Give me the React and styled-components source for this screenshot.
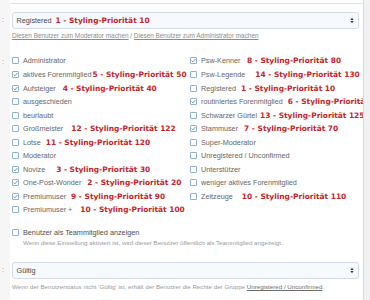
import React from "react";
import styled, { createGlobalStyle } from "styled-components";

const Global = createGlobalStyle`
  html, body { margin: 0; padding: 0; background: #fff; }
  body { overflow: hidden; }
`;

const Page = styled.div`
  display: flex;
  width: 370px;
  height: 300px;
  overflow: hidden;
  background: #fff;
  font-family: "Liberation Sans", Arial, sans-serif;
`;

const Main = styled.div`
  flex: 1;
  min-width: 0;
  display: flex;
  flex-direction: column;
`;

const RightGutter = styled.div`
  width: 6px;
  flex-shrink: 0;
  background: #f0f1f2;
  border-left: 1px solid #dadada;
`;

const FormRow = styled.div`
  display: grid;
  grid-template-columns: 10px 1fr;
  flex: ${(p) => (p.$grow ? 1 : "none")};
`;

const Label = styled.div`
  background: #f6f6f6;
  color: #8a8a8a;
  font-size: 7px;
  line-height: 8px;
  padding-left: 2px;
  padding-top: ${(p) => p.$top || 0}px;
`;

const Controls = styled.div`
  min-width: 0;
  padding: ${(p) => p.$top || 0}px 4px 0 2px;
  height: ${(p) => (p.$h ? p.$h + "px" : "auto")};
  border-bottom: ${(p) => (p.$line ? "1px solid #e3e3e3" : "none")};
`;

const Select = styled.div`
  height: ${(p) => p.$h}px;
  box-sizing: border-box;
  border: 1px solid #d6dce5;
  border-radius: 3px;
  background: #f6f9fd;
  display: flex;
  align-items: center;
  padding: 0 4px 0 3.5px;
  white-space: nowrap;
`;

const SelectText = styled.span`
  font-size: 7.25px;
  color: #4a4a4a;
`;

const Arrows = styled.svg`
  margin-left: auto;
  flex-shrink: 0;
`;

const Red = styled.span`
  font-family: "DejaVu Sans", Verdana, sans-serif;
  font-weight: bold;
  font-size: 7.45px;
  color: #c2262b;
  margin-left: ${(p) => p.$gap || 0}px;
  white-space: nowrap;
`;

const LinkLine = styled.div`
  margin-top: ${(p) => p.$top}px;
  font-size: 6.4px;
  line-height: 8px;
  color: #8c8c8c;
  white-space: nowrap;
`;

const Link = styled.span`
  text-decoration: underline;
  color: ${(p) => p.$dark ? "#6e6e6e" : "#8c8c8c"};
`;

const CheckGrid = styled.div`
  display: grid;
  grid-template-columns: 178px 1fr;
  grid-template-rows: repeat(12, 13.55px);
  grid-auto-flow: column;
`;

const CheckRow = styled.div`
  display: flex;
  align-items: center;
  white-space: nowrap;
  margin-top: ${(p) => p.$top || 0}px;
  height: ${(p) => p.$h || 13.55}px;
`;

const Box = styled.span`
  width: 7px;
  height: 7px;
  box-sizing: border-box;
  flex-shrink: 0;
  border: 1px solid #8db2d6;
  border-radius: 1px;
  background: #fff;
  display: flex;
  align-items: center;
  justify-content: center;
`;

const CheckLabel = styled.span`
  margin-left: 4px;
  font-size: 7.25px;
  color: ${(p) => (p.$dark ? "#4e4e4e" : "#666")};
`;

const Hint = styled.div`
  margin-top: ${(p) => p.$top}px;
  margin-left: ${(p) => p.$left || 0}px;
  font-size: 6.2px;
  line-height: 8px;
  color: #9a9a9a;
  white-space: nowrap;
`;

const Check = () => (
  <svg width="5" height="5" viewBox="0 0 5 5">
    <path d="M0.6 2.6 L1.9 3.8 L4.4 1.1" stroke="#4f86bd" strokeWidth="0.9" fill="none" />
  </svg>
);

const SelectArrows = () => (
  <Arrows width="4" height="7" viewBox="0 0 4 7">
    <path d="M0.4 3 L2 0.8 L3.6 3 Z" fill="#333" />
    <path d="M0.4 4 L2 6.2 L3.6 4 Z" fill="#333" />
  </Arrows>
);

const left = [
  ["Administrator"],
  ["aktives Forenmitglied", "5 - Styling-Priorität 50", 1, true],
  ["Aufsteiger", "4 - Styling-Priorität 40", 7, true],
  ["ausgeschieden"],
  ["beurlaubt"],
  ["Großmeister", "12 - Styling-Priorität 122", 8],
  ["Lotse", "11 - Styling-Priorität 120", 5],
  ["Moderator"],
  ["Novize", "3 - Styling-Priorität 30", 11, true],
  ["One-Post-Wonder", "2 - Styling-Priorität 20", 6, true],
  ["Premiumuser", "9 - Styling-Priorität 90", 5, true],
  ["Premiumuser +", "10 - Styling-Priorität 100", 8],
];

const right = [
  ["Psw-Kenner", "8 - Styling-Priorität 80", 6.5, true],
  ["Psw-Legende", "14 - Styling-Priorität 130", 10],
  ["Registered", "1 - Styling-Priorität 10", 5],
  ["routiniertes Forenmitglied", "6 - Styling-Priorität 60", 5, true],
  ["Schwarzer Gürtel", "13 - Styling-Priorität 125", 3],
  ["Stammuser", "7 - Styling-Priorität 70", 6, true],
  ["Super-Moderator"],
  ["Unregistered / Unconfirmed"],
  ["Unterstützer"],
  ["weniger aktives Forenmitglied"],
  ["Zeitzeuge", "10 - Styling-Priorität 110", 9],
];

const Item = ({ label, red, gap, checked }) => (
  <CheckRow>
    <Box>{checked && <Check />}</Box>
    <CheckLabel>{label}</CheckLabel>
    {red && <Red $gap={gap}>{red}</Red>}
  </CheckRow>
);

export default function App() {
  return (
    <>
      <Global />
      <Page>
        <Main>
          <FormRow>
            <Label />
            <Controls $h={3} $line />
          </FormRow>
          <FormRow>
            <Label $top={12}>:</Label>
            <Controls $top={8}>
              <Select $h={16.5}>
                <SelectText>Registered</SelectText>
                <Red $gap={4}>1 - Styling-Priorität 10</Red>
                <SelectArrows />
              </Select>
              <LinkLine $top={3.5}>
                <Link>Diesen Benutzer zum Moderator machen</Link> / <Link>Diesen Benutzer zum Administrator machen</Link>
              </LinkLine>
            </Controls>
          </FormRow>
          <FormRow>
            <Label $top={18}>:</Label>
            <Controls $top={14.2}>
              <CheckGrid>
                {left.map(([l, r, g, c]) => (
                  <Item key={"l" + l} label={l} red={r} gap={g} checked={c} />
                ))}
                {right.map(([l, r, g, c]) => (
                  <Item key={"r" + l} label={l} red={r} gap={g} checked={c} />
                ))}
              </CheckGrid>
              <CheckRow $top={11.7} $h={9}>
                <Box />
                <CheckLabel $dark>Benutzer als Teammitglied anzeigen</CheckLabel>
              </CheckRow>
              <Hint $top={1.5} $left={11}>
                Wenn diese Einstellung aktiviert ist, wird dieser Benutzer öffentlich als Teammitglied angezeigt.
              </Hint>
            </Controls>
          </FormRow>
          <FormRow $grow>
            <Label $top={19.5}>:</Label>
            <Controls $top={15.3}>
              <Select $h={16.7}>
                <SelectText>Gültig</SelectText>
                <SelectArrows />
              </Select>
              <Hint $top={4.5}>
                Wenn der Benutzerstatus nicht 'Gültig' ist, erhält der Benutzer die Rechte der Gruppe{" "}
                <Link $dark>Unregistered / Unconfirmed</Link>.
              </Hint>
            </Controls>
          </FormRow>
        </Main>
        <RightGutter />
      </Page>
    </>
  );
}
